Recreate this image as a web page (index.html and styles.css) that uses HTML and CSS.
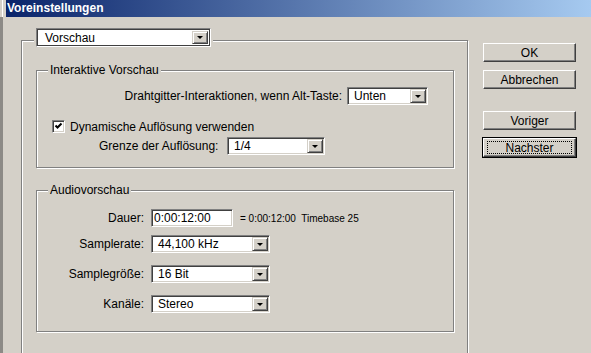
FILE: index.html
```html
<!DOCTYPE html>
<html>
<head>
    <title>Voreinstellungen</title>
    <link rel="stylesheet" href="styles.css">
</head>
<body>
<div class="window">
    <div class="titlebar">Voreinstellungen</div>
    <div class="body">
        <div class="panel">
            <div class="panel-head">
                <div class="combo combo-head">
                    <span class="combo-text">Vorschau</span>
                    <span class="combo-btn"><i class="arrow"></i></span>
                </div>
            </div>

            <!-- Interaktive Vorschau -->
            <div class="group group-first">
                <div class="legend">Interaktive Vorschau</div>
                <div class="row-right">
                    <span>Drahtgitter-Interaktionen, wenn Alt-Taste:</span>
                    <div class="combo combo-unten">
                        <span class="combo-text">Unten</span>
                        <span class="combo-btn"><i class="arrow"></i></span>
                    </div>
                </div>
                <div class="row-check">
                    <span class="check">
                        <svg width="11" height="11" viewBox="0 0 11 11"><polyline points="2.5,4.5 4.5,6.5 8.5,2.5" fill="none" stroke="#000" stroke-width="2"/></svg>
                    </span>
                    <span>Dynamische Auflösung verwenden</span>
                </div>
                <div class="row-limit">
                    <span class="limit-label">Grenze der Auflösung:</span>
                    <div class="combo combo-limit">
                        <span class="combo-text">1/4</span>
                        <span class="combo-btn"><i class="arrow"></i></span>
                    </div>
                </div>
            </div>

            <!-- Audiovorschau -->
            <div class="group group-audio">
                <div class="legend">Audiovorschau</div>
                <div class="arow arow-1">
                    <span class="alabel">Dauer:</span>
                    <div class="field">0:00:12:00</div>
                    <span class="timebase">= 0:00:12:00&nbsp; Timebase 25</span>
                </div>
                <div class="arow arow-2">
                    <span class="alabel">Samplerate:</span>
                    <div class="combo combo-audio">
                        <span class="combo-text">44,100 kHz</span>
                        <span class="combo-btn"><i class="arrow"></i></span>
                    </div>
                </div>
                <div class="arow arow-3">
                    <span class="alabel">Samplegröße:</span>
                    <div class="combo combo-audio">
                        <span class="combo-text">16 Bit</span>
                        <span class="combo-btn"><i class="arrow"></i></span>
                    </div>
                </div>
                <div class="arow arow-3">
                    <span class="alabel">Kanäle:</span>
                    <div class="combo combo-audio">
                        <span class="combo-text">Stereo</span>
                        <span class="combo-btn"><i class="arrow"></i></span>
                    </div>
                </div>
            </div>
        </div>

        <div class="buttons">
            <button class="btn">OK</button>
            <button class="btn btn-gap">Abbrechen</button>
            <button class="btn btn-far">Voriger</button>
            <button class="btn btn-gap btn-default"><span class="focus">Nachster</span></button>
        </div>
    </div>
</div>
</body>
</html>
```

FILE: styles.css
```css
/* Page and window */
body {
    margin: 0;
    background-color: #d4d0c8;
    font-family: "Liberation Sans", Arial, sans-serif;
    font-size: 12px;
    color: #000;
}

.window {
    width: 591px;
    height: 353px;
    overflow: hidden;
}

/* Title bar */
.titlebar {
    height: 17px;
    line-height: 17px;
    padding-left: 7px;
    color: #fff;
    font-weight: bold;
    background: linear-gradient(to right, #d4d0c8 0, #d4d0c8 2px, #fff 2px, #fff 3px, #d4d0c8 3px, #d4d0c8 6px, #0a246a 6px, #a6caf0 100%);
}

.body {
    display: flex;
    align-items: flex-start;
    height: 336px;
    border-left: 3px solid #8c8a86;
}

/* Etched group boxes */
.panel,
.group {
    box-sizing: border-box;
    border: 1px solid #808080;
    box-shadow: inset 1px 1px 0 #fff, 1px 1px 0 #fff;
}

.panel {
    width: 447px;
    margin: 23px 0 0 18px;
    padding: 0 13px 40px 14px;
}

.panel-head {
    width: fit-content;
    margin: -13px 0 0 -2px;
    padding: 0 2px;
    background-color: #d4d0c8;
}

.group-first {
    margin-top: 23px;
    padding-bottom: 12px;
}

.group-audio {
    margin-top: 22px;
    padding-bottom: 18px;
}

.legend {
    width: fit-content;
    margin: -8px 0 0 11px;
    padding: 0 2px;
    line-height: 14px;
    background-color: #d4d0c8;
}

/* Combo boxes and fields */
.combo,
.field,
.check {
    box-sizing: border-box;
    border: 1px solid;
    border-color: #808080 #fff #fff #808080;
    box-shadow: inset 1px 1px 0 #404040, inset -1px -1px 0 #d4d0c8;
    background-color: #fff;
}

.combo {
    display: flex;
    height: 18px;
    padding: 1px;
}

.combo-head {
    width: 175px;
    height: 19px;
    box-shadow: inset 1px 1px 0 #404040, inset -1px -1px 0 #404040;
    padding: 2px;
}

.combo-unten { width: 81px; }
.combo-limit { width: 98px; }
.combo-audio { width: 119px; }

.combo-text {
    flex: 1;
    padding-left: 5px;
    line-height: 14px;
    white-space: nowrap;
}

.combo-head .combo-text {
    padding-left: 6px;
}

.combo-btn {
    display: flex;
    align-items: center;
    justify-content: center;
    width: 16px;
    box-sizing: border-box;
    border: 1px solid;
    border-color: #d4d0c8 #404040 #404040 #d4d0c8;
    box-shadow: inset 1px 1px 0 #fff, inset -1px -1px 0 #808080;
    background-color: #d4d0c8;
}

.arrow {
    width: 0;
    height: 0;
    border-left: 3px solid transparent;
    border-right: 3px solid transparent;
    border-top: 3px solid #000;
}

.field {
    width: 82px;
    height: 18px;
    padding-left: 2px;
    line-height: 16px;
}

/* Interaktive Vorschau rows */
.row-right {
    display: flex;
    justify-content: flex-end;
    align-items: center;
    gap: 5px;
    margin-top: 10px;
    padding-right: 25px;
}

.row-check {
    display: flex;
    align-items: center;
    gap: 5px;
    height: 13px;
    margin: 15px 0 0 15px;
}

.check {
    width: 13px;
    height: 13px;
}

.check svg {
    display: block;
}

.row-limit {
    display: flex;
    align-items: center;
    gap: 14px;
    margin: 4px 0 0 62px;
}

.limit-label {
    width: 114px;
    white-space: nowrap;
}

/* Audiovorschau rows */
.arow {
    display: flex;
    align-items: center;
}

.arow-1 { margin-top: 12px; }
.arow-2 { margin-top: 8px; }
.arow-3 { margin-top: 12px; }

.alabel {
    width: 107px;
    margin-right: 7px;
    text-align: right;
}

.timebase {
    margin-left: 7px;
    font-size: 10px;
}

/* Right button column */
.buttons {
    display: flex;
    flex-direction: column;
    width: 93px;
    margin-left: 15px;
    padding-top: 26px;
}

.btn {
    display: flex;
    align-items: center;
    justify-content: center;
    height: 19px;
    padding: 0;
    box-sizing: border-box;
    border: 1px solid;
    border-color: #fff #404040 #404040 #fff;
    box-shadow: inset -1px -1px 0 #808080;
    background-color: #d4d0c8;
    font-family: "Liberation Sans", Arial, sans-serif;
    font-size: 12px;
    color: #000;
}

.btn-gap { margin-top: 8px; }
.btn-far { margin-top: 22px; }

.btn-default {
    box-shadow: 0 0 0 1px #000, inset -1px -1px 0 #808080;
}

.focus {
    flex: 1;
    align-self: stretch;
    display: flex;
    align-items: center;
    justify-content: center;
    margin: 2px 3px;
    border: 1px dotted #000;
}
```
